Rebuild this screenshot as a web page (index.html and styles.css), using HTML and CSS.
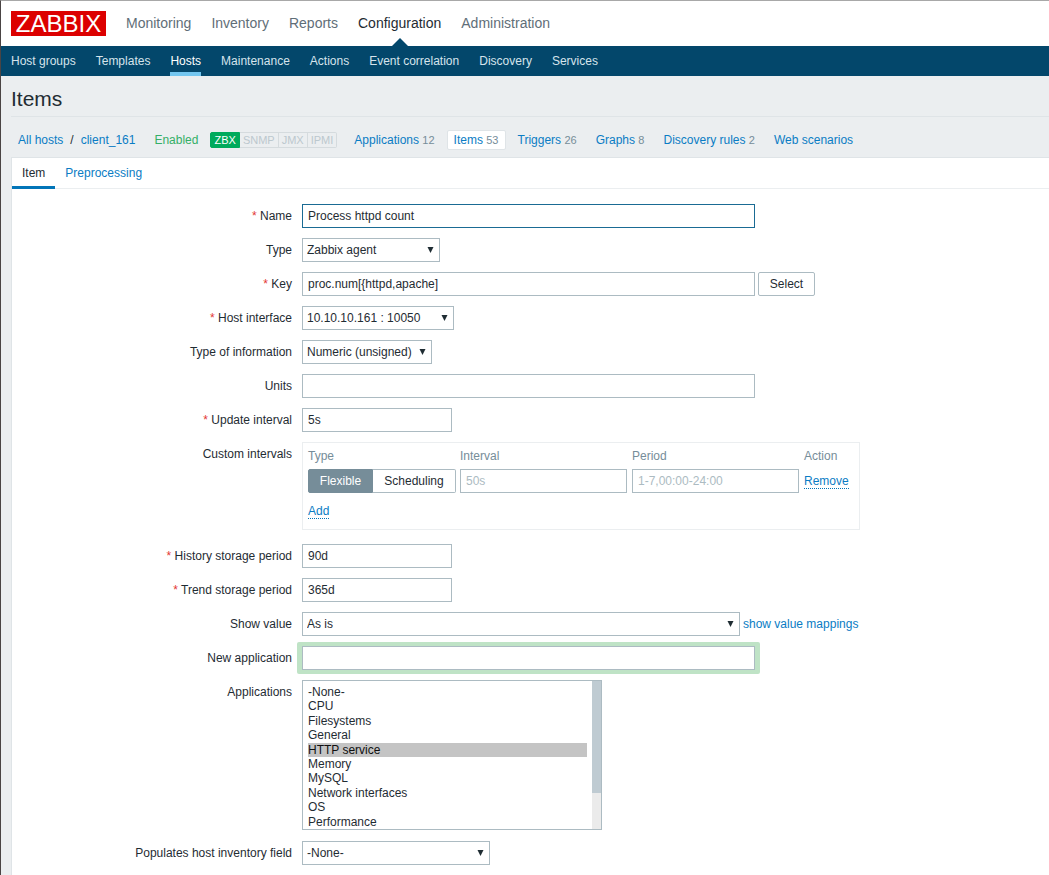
FILE: index.html
```html
<!DOCTYPE html>
<html lang="en">
  <head>
    <meta charset="UTF-8" />
    <title>Configuration of items</title>
    <link rel="stylesheet" href="styles.css">
  </head>

  <body>
    <header class="topNav">
      <div class="logo">ZABBIX</div>
      <a class="topLink">Monitoring</a>
      <a class="topLink">Inventory</a>
      <a class="topLink">Reports</a>
      <a class="topLink topActive">Configuration</a>
      <a class="topLink">Administration</a>
    </header>

    <nav class="subNav">
      <a class="subLink">Host groups</a>
      <a class="subLink">Templates</a>
      <a class="subLink subActive">Hosts</a>
      <a class="subLink">Maintenance</a>
      <a class="subLink">Actions</a>
      <a class="subLink">Event correlation</a>
      <a class="subLink">Discovery</a>
      <a class="subLink">Services</a>
    </nav>

    <main class="page">
      <h1 class="title">Items</h1>

      <div class="hostNav">
        <a class="crumb">All hosts</a>
        <span class="crumbSep">/</span>
        <a class="crumb crumbLast">client_161</a>
        <span class="enabled">Enabled</span>
        <div class="badges">
          <span class="badge badgeOn">ZBX</span>
          <span class="badge">SNMP</span>
          <span class="badge">JMX</span>
          <span class="badge">IPMI</span>
        </div>
        <a class="hostTab">Applications <small>12</small></a>
        <a class="hostTab hostTabActive">Items <small>53</small></a>
        <a class="hostTab">Triggers <small>26</small></a>
        <a class="hostTab">Graphs <small>8</small></a>
        <a class="hostTab">Discovery rules <small>2</small></a>
        <a class="hostTab">Web scenarios</a>
      </div>

      <section class="panel">
        <div class="tabs">
          <a class="tab tabActive">Item</a>
          <a class="tab">Preprocessing</a>
        </div>

        <form class="itemForm">
          <label class="fieldLabel"><span class="req">*</span> Name</label>
          <div class="field"><input type="text" class="wide focused" value="Process httpd count" /></div>

          <label class="fieldLabel">Type</label>
          <div class="field">
            <select class="wType"><option>Zabbix agent</option></select>
          </div>

          <label class="fieldLabel"><span class="req">*</span> Key</label>
          <div class="field">
            <input type="text" class="wide" value="proc.num[{httpd,apache]" />
            <button type="button" class="btnSelect">Select</button>
          </div>

          <label class="fieldLabel"><span class="req">*</span> Host interface</label>
          <div class="field">
            <select class="wHost"><option>10.10.10.161 : 10050</option></select>
          </div>

          <label class="fieldLabel">Type of information</label>
          <div class="field">
            <select class="wInfo"><option>Numeric (unsigned)</option></select>
          </div>

          <label class="fieldLabel">Units</label>
          <div class="field"><input type="text" class="wide" /></div>

          <label class="fieldLabel"><span class="req">*</span> Update interval</label>
          <div class="field"><input type="text" class="short" value="5s" /></div>

          <label class="fieldLabel">Custom intervals</label>
          <div class="field fieldIntervals">
            <div class="intervals">
              <div class="intervalHead">Type</div>
              <div class="intervalHead">Interval</div>
              <div class="intervalHead">Period</div>
              <div class="intervalHead">Action</div>
              <div class="segmented">
                <span class="segment segmentOn">Flexible</span>
                <span class="segment">Scheduling</span>
              </div>
              <input type="text" placeholder="50s" />
              <input type="text" placeholder="1-7,00:00-24:00" />
              <div><a class="dotted">Remove</a></div>
              <div class="intervalAdd"><a class="dotted">Add</a></div>
            </div>
          </div>

          <label class="fieldLabel"><span class="req">*</span> History storage period</label>
          <div class="field"><input type="text" class="short" value="90d" /></div>

          <label class="fieldLabel"><span class="req">*</span> Trend storage period</label>
          <div class="field"><input type="text" class="short" value="365d" /></div>

          <label class="fieldLabel">Show value</label>
          <div class="field">
            <select class="wShow"><option>As is</option></select>
            <a class="mappings">show value mappings</a>
          </div>

          <label class="fieldLabel">New application</label>
          <div class="field">
            <div class="highlight"><input type="text" class="wide" /></div>
          </div>

          <label class="fieldLabel">Applications</label>
          <div class="field fieldList">
            <div class="appWrap">
              <select class="appList" multiple size="10">
                <option>-None-</option>
                <option>CPU</option>
                <option>Filesystems</option>
                <option>General</option>
                <option selected>HTTP service</option>
                <option>Memory</option>
                <option>MySQL</option>
                <option>Network interfaces</option>
                <option>OS</option>
                <option>Performance</option>
                <option>Processes</option>
                <option>Security</option>
                <option>Zabbix agent</option>
              </select>
              <div class="appScroll"><div class="appThumb"></div></div>
            </div>
          </div>

          <label class="fieldLabel">Populates host inventory field</label>
          <div class="field">
            <select class="wInv"><option>-None-</option></select>
          </div>
        </form>
      </section>
    </main>
  </body>
</html>
```

FILE: styles.css
```css
* {
  box-sizing: border-box;
}
html, body {
  height: 875px;
  overflow: hidden;
}
body {
  margin: 0;
  font-family: "Liberation Sans", Arial, sans-serif;
  font-size: 12px;
  color: #1f2c33;
  background: #ebeef0;
  border-top: 1px solid #a8a8a8;
  border-left: 1px solid #4a4444;
}
a {
  color: #0a7cc4;
}

/* top menu */
.topNav {
  display: flex;
  align-items: center;
  height: 45px;
  padding-left: 10px;
  background: white;
}
.logo {
  width: 95px;
  height: 25px;
  margin-right: 10px;
  background: #dc0000;
  color: white;
  font-size: 24px;
  line-height: 25px;
  text-align: center;
}
.topLink {
  position: relative;
  padding: 0 10px 2px;
  font-size: 14px;
  color: #5f6e78;
}
.topActive {
  color: #1f2c33;
}
.topActive::after {
  content: "";
  position: absolute;
  left: 50%;
  top: 23px;
  margin-left: -8px;
  border-left: 8px solid transparent;
  border-right: 8px solid transparent;
  border-bottom: 8px solid #03476b;
}
.subNav {
  display: flex;
  height: 30px;
  padding-left: 10px;
  background: #03476b;
}
.subLink {
  margin-right: 20px;
  line-height: 30px;
  color: #d6e4ec;
}
.subActive {
  color: white;
  border-bottom: 4px solid #73c6f0;
}

/* title and host navigation */
.page {
  padding-left: 10px;
}
.title {
  height: 41px;
  margin: 0;
  border-bottom: 1px solid #dfe4e7;
  font-size: 21px;
  font-weight: normal;
  line-height: 46px;
}
.hostNav {
  display: flex;
  align-items: center;
  height: 40px;
  padding-top: 6px;
}
.crumb {
  margin-left: 7px;
}
.crumbSep {
  margin-left: 7px;
  margin-right: 7px;
}
.crumbLast {
  margin-left: 0;
  margin-right: 19px;
}
.enabled {
  margin-right: 12px;
  color: #34af67;
}
.badges {
  display: flex;
  margin-right: 10px;
}
.badge {
  height: 16px;
  padding: 0 3px;
  border: 1px solid #d5dbde;
  border-left: 0;
  font-size: 11px;
  line-height: 14px;
  color: #bcc8ce;
}
.badgeOn {
  border: 1px solid #00aa5c;
  border-radius: 2px 0 0 2px;
  background: #00aa5c;
  color: white;
}
.badge:last-child {
  border-radius: 0 2px 2px 0;
}
.hostTab {
  height: 20px;
  margin-right: 5px;
  padding: 0 6px;
  border: 1px solid transparent;
  line-height: 18px;
}
.hostTab small {
  font-size: 11px;
  color: #768d99;
}
.hostTabActive {
  border-color: #dfe4e7;
  border-radius: 2px;
  background: white;
}

/* white panel */
.panel {
  height: 720px;
  border-top: 1px solid #dfe4e7;
  border-left: 1px solid #dfe4e7;
  background: white;
}
.tabs {
  display: flex;
  height: 31px;
  border-bottom: 1px solid #ebeef0;
}
.tab {
  height: 31px;
  padding: 0 10px;
  line-height: 30px;
}
.tabActive {
  color: #1f2c33;
  border-bottom: 3px solid #0275b8;
}

/* form rows */
.itemForm {
  display: grid;
  grid-template-columns: 280px 1fr;
  column-gap: 10px;
  padding-top: 15px;
}
.fieldLabel {
  line-height: 24px;
  text-align: right;
}
.req {
  color: #e33734;
}
.field {
  display: flex;
  align-items: flex-start;
  min-height: 24px;
  margin-bottom: 10px;
}
.fieldIntervals {
  margin-bottom: 14px;
}
.fieldList {
  margin-bottom: 11px;
}
input, select, button {
  height: 24px;
  border: 1px solid #acbbc2;
  background-color: white;
  color: #1f2c33;
  font-family: inherit;
  font-size: 12px;
}
input {
  padding: 0 5px;
}
input::placeholder {
  color: #acbbc2;
}
select {
  appearance: none;
  padding: 0 0 0 4px;
  border-radius: 0;
  background-image: url("data:image/svg+xml,%3Csvg xmlns='http://www.w3.org/2000/svg' width='7' height='6'%3E%3Cpath d='M0.5 0h6L3.5 6z' fill='%231f2c33'/%3E%3C/svg%3E");
  background-repeat: no-repeat;
  background-position: right 5px center;
}
.wide {
  width: 453px;
}
.short {
  width: 150px;
}
.focused {
  border-color: #1a6b94;
}
.wType {
  width: 138px;
}
.wHost {
  width: 152px;
}
.wInfo {
  width: 130px;
}
.wShow {
  width: 438px;
}
.wInv {
  width: 188px;
}
.btnSelect {
  width: 57px;
  margin-left: 3px;
  border-radius: 2px;
}
.mappings {
  margin-left: 3px;
  line-height: 24px;
}
.highlight {
  margin: -4px -5px;
  padding: 4px 5px;
  border-radius: 2px;
  background: #bfe3c6;
}

/* custom intervals table */
.intervals {
  display: grid;
  grid-template-columns: 147px 167px 167px 50px;
  grid-template-rows: 21px 24px auto;
  column-gap: 5px;
  width: 558px;
  height: 88px;
  padding: 5px;
  border: 1px solid #ebeef0;
}
.intervals input {
  width: 100%;
}
.intervalHead {
  padding-top: 1px;
  color: #768d99;
}
.segmented {
  display: flex;
  width: 148px;
}
.segment {
  width: 83px;
  height: 24px;
  border: 1px solid #acbbc2;
  border-left: 0;
  border-radius: 0 2px 2px 0;
  line-height: 22px;
  text-align: center;
}
.segmentOn {
  width: 65px;
  border: 1px solid #768d99;
  border-radius: 2px 0 0 2px;
  background: #768d99;
  color: white;
}
.dotted {
  border-bottom: 1px dotted #0275b8;
  line-height: 24px;
}
.intervalAdd {
  grid-column: 1 / 5;
  margin-top: 6px;
}

/* applications list */
.appWrap {
  position: relative;
  width: 300px;
  height: 150px;
}
.appList {
  width: 300px;
  height: 150px;
  padding: 4px 0 4px 5px;
  background-image: none;
  overflow-y: scroll;
}
.appList option {
  padding: 0;
  margin-right: 14px;
}
.appList option:checked {
  background: linear-gradient(#c4c4c4, #c4c4c4);
}
.appScroll {
  position: absolute;
  top: 1px;
  right: 1px;
  width: 9px;
  height: 148px;
  background: #ebebeb;
}
.appThumb {
  height: 112px;
  background: #bfcbd2;
}
```
